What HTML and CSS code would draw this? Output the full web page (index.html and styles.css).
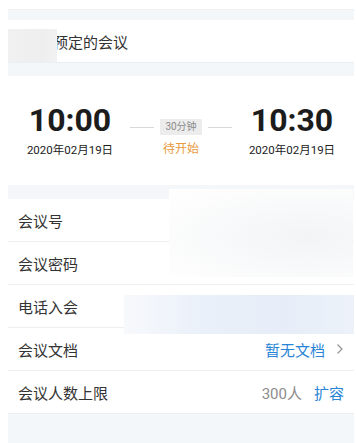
FILE: index.html
```html
<!DOCTYPE html>
<html lang="zh">
<head>
<meta charset="utf-8">
<link rel="stylesheet" href="styles.css">
</head>
<body>
<div class="page">
  <div class="top-card"></div>
  <div class="title-row">
    <span class="title">预定的会议</span>
    <div class="mask mask-title"></div>
  </div>
  <div class="time-card">
    <div class="time-block">
      <div class="time">10:00</div>
      <div class="date">2020年02月19日</div>
    </div>
    <div class="mid">
      <div class="mid-top">
        <span class="line"></span>
        <span class="badge">30分钟</span>
        <span class="line"></span>
      </div>
      <div class="status">待开始</div>
    </div>
    <div class="time-block">
      <div class="time">10:30</div>
      <div class="date">2020年02月19日</div>
    </div>
  </div>
  <div class="list">
    <div class="row"><span class="label">会议号</span></div>
    <div class="row"><span class="label">会议密码</span></div>
    <div class="row"><span class="label">电话入会</span></div>
    <div class="row">
      <span class="label">会议文档</span>
      <span class="right"><span class="link">暂无文档</span><svg class="chev" width="8" height="12" viewBox="0 0 8 12"><path d="M1.5 1.5 L6 6 L1.5 10.5" fill="none" stroke="#9a9a9a" stroke-width="1.3"/></svg></span>
    </div>
    <div class="row">
      <span class="label">会议人数上限</span>
      <span class="right"><span class="muted">300人</span><span class="link">扩容</span></span>
    </div>
    <div class="mask mask-a"></div>
    <div class="mask mask-b"></div>
  </div>
</div>
</body>
</html>
```
FILE: styles.css
```css
* { box-sizing: border-box; }
html, body { margin: 0; padding: 0; background: #ffffff; }
body {
  width: 356px;
  height: 443px;
  overflow: hidden;
  font-family: Roboto, "Noto Sans CJK SC", sans-serif;
  color: #333333;
}
.page {
  margin-left: 8px;
  width: 346px;
  height: 443px;
  background: #f4f7fa;
}
.top-card {
  height: 10px;
  background: #ffffff;
  border-bottom: 1px solid #eef0f2;
  margin-bottom: 10px;
}
.title-row {
  position: relative;
  height: 43px;
  background: #ffffff;
  border-bottom: 1px solid #eceef0;
  display: flex;
  align-items: center;
  padding-left: 45px;
  margin-bottom: 13px;
}
.title {
  font-size: 15px;
  color: #333333;
}
.mask { position: absolute; pointer-events: none; }
.mask-title {
  left: 0;
  top: 9px;
  width: 49px;
  height: 33px;
  background: linear-gradient(90deg, #f1f1f1, #eeeeee 70%, #f2f2f2);
}
.time-card {
  height: 109px;
  background: #ffffff;
  display: flex;
  justify-content: space-between;
  align-items: flex-start;
  padding: 26px 18px 0 18px;
  margin-bottom: 14px;
}
.time-block {
  display: flex;
  flex-direction: column;
  align-items: center;
  width: 88px;
}
.time {
  font-size: 32px;
  font-weight: 700;
  line-height: 36px;
  color: #1c1c1c;
}
.date {
  font-size: 11.5px;
  line-height: 14px;
  margin-top: 5px;
  color: #222222;
}
.mid {
  display: flex;
  flex-direction: column;
  align-items: center;
  padding-top: 17px;
}
.mid-top {
  display: flex;
  align-items: center;
  gap: 6px;
}
.line {
  width: 24px;
  height: 1px;
  background: #d8d8d8;
}
.badge {
  background: #ececec;
  color: #8a8a8a;
  font-size: 10px;
  line-height: 16px;
  height: 16px;
  padding: 0 5px;
  border-radius: 1px;
}
.status {
  margin-top: 6px;
  font-size: 12px;
  line-height: 16px;
  color: #e89a40;
}
.list {
  position: relative;
  background: #ffffff;
}
.row {
  height: 43px;
  display: flex;
  align-items: center;
  justify-content: space-between;
  padding: 0 10px;
  border-bottom: 1px solid #eeeeee;
}
.label {
  font-size: 15px;
  color: #333333;
}
.right {
  display: flex;
  align-items: center;
}
.link {
  font-size: 15px;
  color: #2b85d6;
}
.muted {
  font-size: 15px;
  color: #8c8c8c;
  margin-right: 12px;
}
.chev { margin-left: 11px; }
.mask-a {
  left: 161px;
  top: -10px;
  width: 184px;
  height: 88px;
  background: radial-gradient(ellipse at 75% 55%, #f3f4f6 0%, #f8f9fa 45%, #fdfdfd 80%, #ffffff 100%);
}
.mask-b {
  left: 116px;
  top: 96px;
  width: 230px;
  height: 39px;
  background: linear-gradient(90deg, #f7f9fc 0%, #eaf0f9 35%, #e6edf8 70%, #edf2f9 100%);
}
```
